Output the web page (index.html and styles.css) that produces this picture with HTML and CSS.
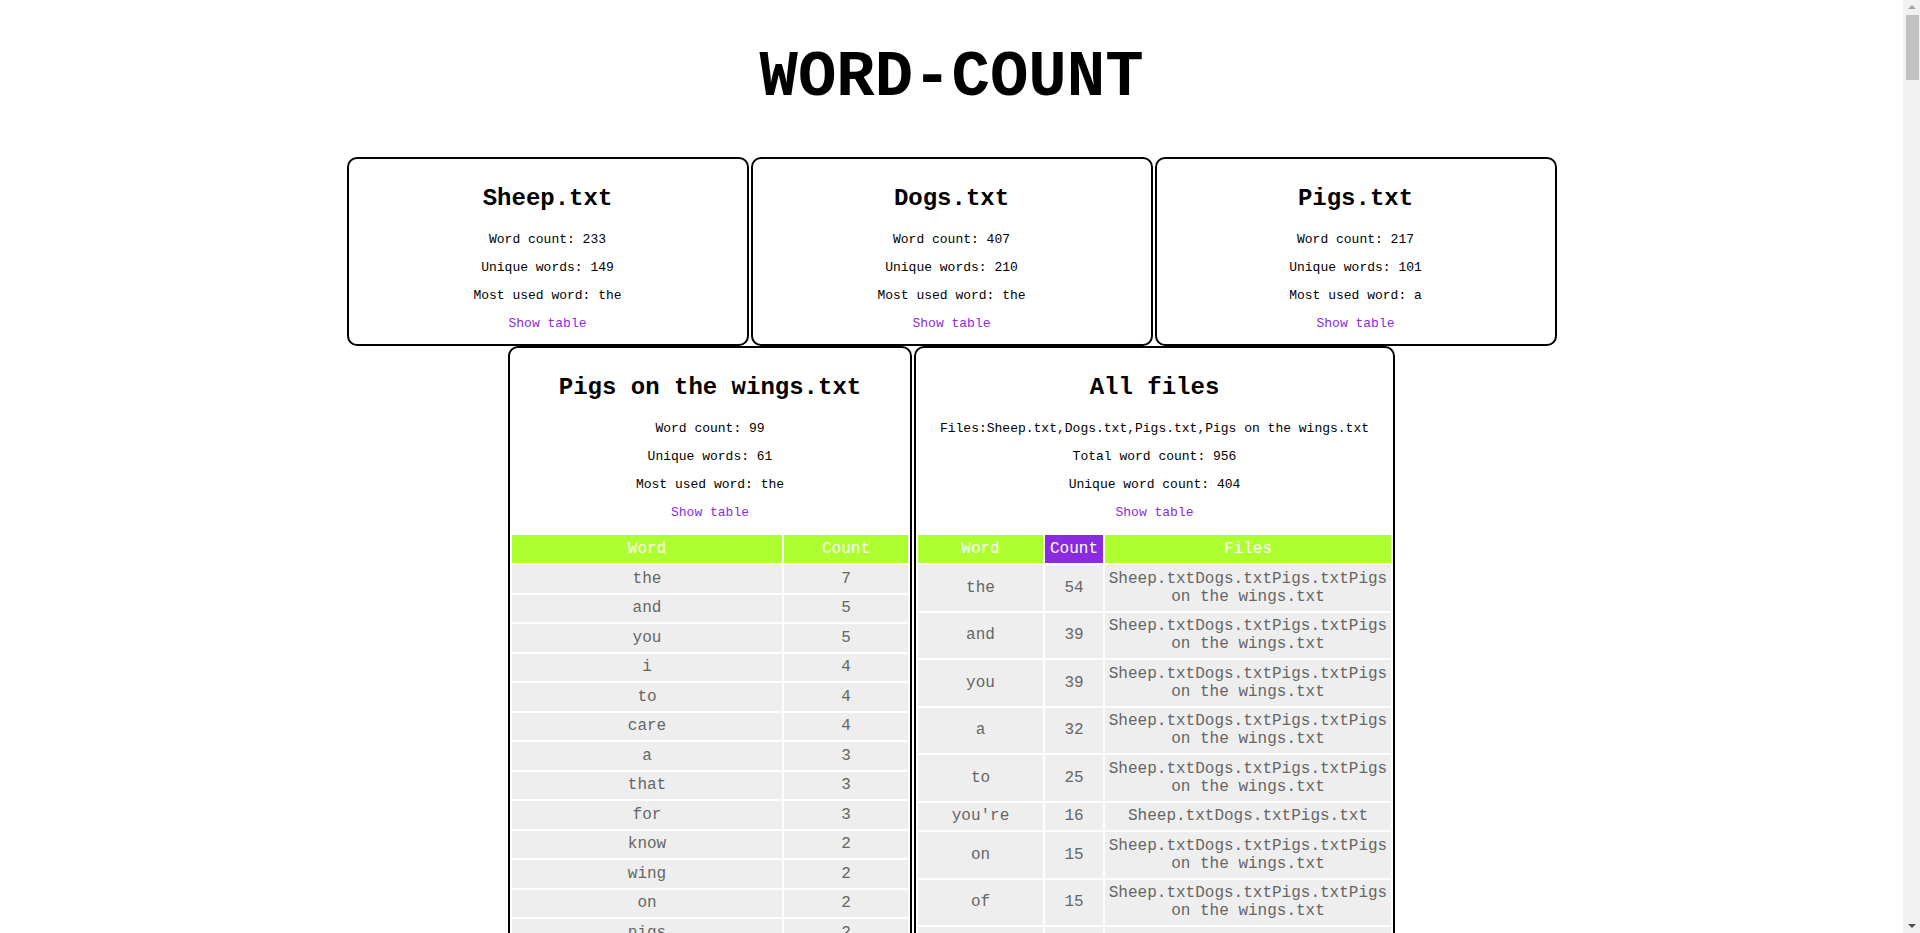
FILE: index.html
```html
<!DOCTYPE html>
<html lang="en">
<head>
<meta charset="utf-8">
<title>WORD-COUNT</title>
<link rel="stylesheet" href="styles.css">
</head>
<body>
<h1 class="page-title">WORD-COUNT</h1>
<main class="cards">
  <section class="card card-small">
    <h2 class="card-title">Sheep.txt</h2>
    <p class="stat">Word count: 233</p>
    <p class="stat">Unique words: 149</p>
    <p class="stat">Most used word: the</p>
    <p class="stat"><a class="toggle" href="#">Show table</a></p>
  </section>
  <section class="card card-small">
    <h2 class="card-title">Dogs.txt</h2>
    <p class="stat">Word count: 407</p>
    <p class="stat">Unique words: 210</p>
    <p class="stat">Most used word: the</p>
    <p class="stat"><a class="toggle" href="#">Show table</a></p>
  </section>
  <section class="card card-small">
    <h2 class="card-title">Pigs.txt</h2>
    <p class="stat">Word count: 217</p>
    <p class="stat">Unique words: 101</p>
    <p class="stat">Most used word: a</p>
    <p class="stat"><a class="toggle" href="#">Show table</a></p>
  </section>
  <section class="card card-file">
    <h2 class="card-title">Pigs on the wings.txt</h2>
    <p class="stat">Word count: 99</p>
    <p class="stat">Unique words: 61</p>
    <p class="stat">Most used word: the</p>
    <p class="stat"><a class="toggle" href="#">Show table</a></p>
    <table class="words">
      <colgroup><col class="col-word-wide"><col class="col-count-wide"></colgroup>
      <thead><tr><th>Word</th><th>Count</th></tr></thead>
      <tbody>
        <tr><td>the</td><td>7</td></tr>
        <tr><td>and</td><td>5</td></tr>
        <tr><td>you</td><td>5</td></tr>
        <tr><td>i</td><td>4</td></tr>
        <tr><td>to</td><td>4</td></tr>
        <tr><td>care</td><td>4</td></tr>
        <tr><td>a</td><td>3</td></tr>
        <tr><td>that</td><td>3</td></tr>
        <tr><td>for</td><td>3</td></tr>
        <tr><td>know</td><td>2</td></tr>
        <tr><td>wing</td><td>2</td></tr>
        <tr><td>on</td><td>2</td></tr>
        <tr><td>pigs</td><td>2</td></tr>
        <tr><td>if</td><td>2</td></tr>
        <tr><td>didn't</td><td>1</td></tr>
        <tr><td>what</td><td>1</td></tr>
        <tr><td>happened</td><td>1</td></tr>
      </tbody>
    </table>
  </section>
  <section class="card card-all">
    <h2 class="card-title">All files</h2>
    <p class="stat">Files:Sheep.txt,Dogs.txt,Pigs.txt,Pigs on the wings.txt</p>
    <p class="stat">Total word count: 956</p>
    <p class="stat">Unique word count: 404</p>
    <p class="stat"><a class="toggle" href="#">Show table</a></p>
    <table class="words">
      <colgroup><col class="col-word"><col class="col-count"><col class="col-files"></colgroup>
      <thead><tr><th>Word</th><th class="th-active">Count</th><th>Files</th></tr></thead>
      <tbody>
        <tr><td>the</td><td>54</td><td>Sheep.txtDogs.txtPigs.txtPigs on the wings.txt</td></tr>
        <tr><td>and</td><td>39</td><td>Sheep.txtDogs.txtPigs.txtPigs on the wings.txt</td></tr>
        <tr><td>you</td><td>39</td><td>Sheep.txtDogs.txtPigs.txtPigs on the wings.txt</td></tr>
        <tr><td>a</td><td>32</td><td>Sheep.txtDogs.txtPigs.txtPigs on the wings.txt</td></tr>
        <tr><td>to</td><td>25</td><td>Sheep.txtDogs.txtPigs.txtPigs on the wings.txt</td></tr>
        <tr><td>you're</td><td>16</td><td>Sheep.txtDogs.txtPigs.txt</td></tr>
        <tr><td>on</td><td>15</td><td>Sheep.txtDogs.txtPigs.txtPigs on the wings.txt</td></tr>
        <tr><td>of</td><td>15</td><td>Sheep.txtDogs.txtPigs.txtPigs on the wings.txt</td></tr>
        <tr><td>is</td><td>14</td><td>Sheep.txtDogs.txtPigs.txt</td></tr>
        <tr><td>in</td><td>13</td><td>Sheep.txtDogs.txtPigs.txtPigs on the wings.txt</td></tr>
      </tbody>
    </table>
  </section>
</main>
<div class="scrollbar" aria-hidden="true">
  <span class="scroll-arrow scroll-up"></span>
  <span class="scroll-thumb"></span>
  <span class="scroll-arrow scroll-down"></span>
</div>
</body>
</html>
```

FILE: styles.css
```css
html, body {
  margin: 0;
  padding: 0;
  background: #ffffff;
}

body {
  font-family: "Liberation Mono", "Courier New", monospace;
  color: #000000;
  padding-right: 17px;
}

.page-title {
  margin: 42px 0 43px;
  font-size: 64px;
  line-height: 72px;
  font-weight: bold;
  text-align: center;
}

.cards {
  max-width: 1212px;
  margin: 0 auto;
  display: flex;
  flex-wrap: wrap;
  justify-content: center;
  align-items: flex-start;
  gap: 0 2px;
  padding-bottom: 40px;
}

.card {
  box-sizing: border-box;
  border: 2px solid #000000;
  border-radius: 10px;
  padding: 6px 0 0;
  text-align: center;
  overflow: hidden;
  background: #ffffff;
}

.card-small { width: 402px; }
.card-file { width: 404px; }
.card-all { width: 481px; }

.card-title {
  margin: 20px 0;
  font-size: 24px;
  font-weight: bold;
}

.stat {
  margin: 13px 0;
  font-size: 13px;
}

.toggle {
  color: #8a2be2;
  text-decoration: none;
}

.words {
  width: 100%;
  table-layout: fixed;
  border-collapse: separate;
  border-spacing: 2px;
  font-size: 16px;
}

.col-word-wide { width: 270px; }
.col-count-wide { width: 124px; }
.col-word { width: 125px; }
.col-count { width: 58px; }
.col-files { width: 286px; }

.words th {
  background: #adff2f;
  color: #ffffff;
  font-weight: normal;
  padding: 5px 1px;
}

.words th.th-active {
  background: #8a2be2;
}

.words td {
  background: #eeeeee;
  color: #666666;
  padding: 4.75px 1px;
  text-align: center;
  vertical-align: middle;
}

/* decorative browser scrollbar, as shown in the reference */
.scrollbar {
  position: fixed;
  top: 0;
  right: 0;
  width: 17px;
  height: 100vh;
  background: #f1f1f1;
  display: flex;
  flex-direction: column;
  align-items: center;
}

.scroll-arrow {
  width: 0;
  height: 0;
  border-left: 4px solid transparent;
  border-right: 4px solid transparent;
}

.scroll-up {
  margin-top: 5px;
  border-bottom: 4px solid #a3a3a3;
}

.scroll-thumb {
  margin-top: 6px;
  width: 13px;
  height: 65px;
  margin-left: 2px;
  background: #c1c1c1;
}

.scroll-down {
  margin-top: auto;
  margin-bottom: 5px;
  border-top: 4px solid #505050;
}
```
